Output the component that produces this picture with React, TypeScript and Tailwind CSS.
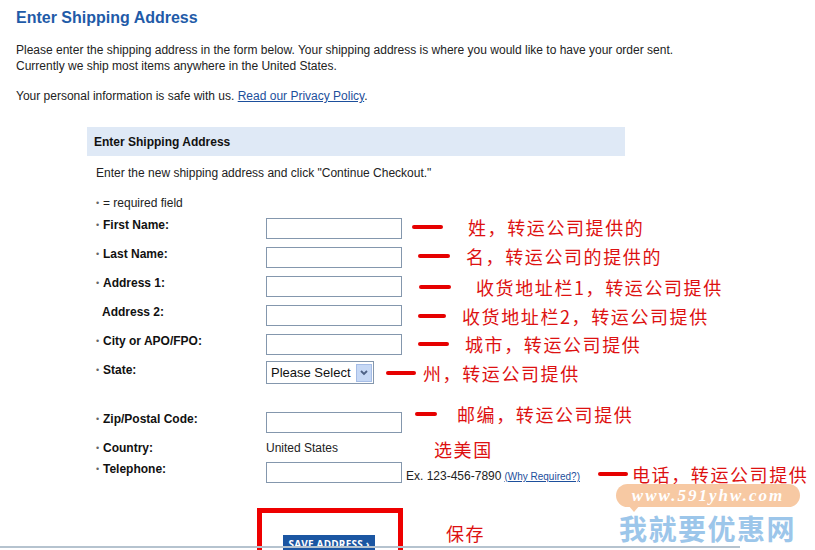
import type { FC, ReactElement, ReactNode } from "react";

const cjk = "font-['Noto_Sans_CJK_SC','Noto_Sans',sans-serif]";

interface RowProps {
  label: string;
  required?: boolean;
  h: string;
  labelPad?: string;
  children?: ReactNode;
}

const Row: FC<RowProps> = ({ label, required = true, h, labelPad = "", children }): ReactElement => {
  return (
    <div className={`flex items-start ${h}`}>
      <div className={`w-[170px] flex items-center leading-[14px] ${labelPad}`}>
        {required ? (
          <span className="w-[7px] text-[9px] text-[#666]">•</span>
        ) : (
          <span className="w-[6px]" />
        )}
        <span className="font-bold text-[12px] text-[#111]">{label}</span>
      </div>
      {children}
    </div>
  );
};

const Field: FC = (): ReactElement => (
  <div className="w-[136px] h-[21px] border border-[#8497ad] bg-white" />
);

interface NoteProps {
  dash?: string;
  text: string;
  pos: string;
}

const Note: FC<NoteProps> = ({ dash, text, pos }): ReactElement => (
  <div className={`absolute flex items-center ${pos}`}>
    {dash && <span className={`h-[4px] rounded-full bg-[#e60000] ${dash}`} />}
    <span className={`${cjk} text-[18px] leading-[22px] tracking-[1.6px] text-[#dd1111] whitespace-nowrap`}>
      {text}
    </span>
  </div>
);

const App: FC = (): ReactElement => {
  return (
    <div className="relative w-[815px] h-[550px] overflow-hidden bg-white font-['Liberation_Sans',Arial,sans-serif] text-[#222]">
      <div className="pl-4 pt-[8px]">
        <h1 className="text-[16px] leading-[20px] font-bold text-[#1f5ba8]">Enter Shipping Address</h1>
        <p className="mt-[14px] text-[12px] leading-[16px]">
          Please enter the shipping address in the form below. Your shipping address is where you would like to have your order sent.
          <br />
          Currently we ship most items anywhere in the United States.
        </p>
        <p className="mt-[14px] text-[12px] leading-[16px]">
          Your personal information is safe with us.{" "}
          <a className="text-[#1d4f9c] underline">Read our Privacy Policy</a>.
        </p>
      </div>

      <div className="ml-[87px] mt-[23px] w-[538px]">
        <div className="h-[29px] bg-[#dfe9f6] pl-[7px] flex items-center">
          <span className="font-bold text-[12px] text-[#111]">Enter Shipping Address</span>
        </div>
        <div className="pl-[9px]">
          <p className="mt-[9px] text-[12px] leading-[16px]">
            Enter the new shipping address and click "Continue Checkout."
          </p>
          <p className="mt-[14px] text-[12px] leading-[16px] flex items-center">
            <span className="w-[7px] text-[9px] text-[#666]">•</span>= required field
          </p>
          <div className="mt-[7px]">
            <Row label="First Name:" h="h-[29px]">
              <Field />
            </Row>
            <Row label="Last Name:" h="h-[29px]">
              <Field />
            </Row>
            <Row label="Address 1:" h="h-[29px]">
              <Field />
            </Row>
            <Row label="Address 2:" required={false} h="h-[29px]">
              <Field />
            </Row>
            <Row label="City or APO/FPO:" h="h-[27px]">
              <Field />
            </Row>
            <Row label="State:" h="h-[51px]" labelPad="pt-[2px]">
              <div className="w-[108px] h-[23px] border border-[#8497ad] bg-white flex items-center justify-between pl-[4px] pr-[1px]">
                <span className="text-[13px] leading-[16px] text-[#111] whitespace-nowrap">Please Select</span>
                <span className="shrink-0 w-[16px] h-[18px] bg-[#c6d8f5] border border-[#a6bde6] flex items-center justify-center">
                  <svg width="8" height="6" viewBox="0 0 8 6">
                    <path d="M1 1 L4 4 L7 1" stroke="#4d6185" strokeWidth="1.8" fill="none" />
                  </svg>
                </span>
              </div>
            </Row>
            <Row label="Zip/Postal Code:" h="h-[29px]">
              <Field />
            </Row>
            <Row label="Country:" h="h-[21px]">
              <span className="text-[12px] leading-[14px]">United States</span>
            </Row>
            <Row label="Telephone:" h="h-[29px]">
              <div className="flex items-end">
                <Field />
                <span className="ml-[4px] text-[12px] leading-[14px]">Ex. 123-456-7890</span>
                <a className="ml-[3px] text-[10px] leading-[13px] text-[#1d4f9c] underline">(Why Required?)</a>
              </div>
            </Row>
          </div>
        </div>
      </div>

      {/* red annotations */}
      <Note pos="left-[412px] top-[216px]" dash="w-[31px] mr-[25px]" text="姓，转运公司提供的" />
      <Note pos="left-[418px] top-[245px]" dash="w-[32px] mr-[16px]" text="名，转运公司的提供的" />
      <Note pos="left-[419px] top-[276px]" dash="w-[32px] mr-[25px]" text="收货地址栏1，转运公司提供" />
      <Note pos="left-[418px] top-[305px]" dash="w-[28px] mr-[16px]" text="收货地址栏2，转运公司提供" />
      <Note pos="left-[418px] top-[333px]" dash="w-[31px] mr-[16px]" text="城市，转运公司提供" />
      <Note pos="left-[386px] top-[362px]" dash="w-[30px] mr-[7px]" text="州，转运公司提供" />
      <Note pos="left-[415px] top-[403px]" dash="w-[22px] mr-[20px]" text="邮编，转运公司提供" />
      <Note pos="left-[434px] top-[438px]" text="选美国" />
      <Note pos="left-[598px] top-[463px]" dash="w-[30px] mr-[4px]" text="电话，转运公司提供" />
      <Note pos="left-[446px] top-[522px]" text="保存" />

      {/* watermark */}
      <div className="absolute left-[616px] top-[484px] w-[184px] h-[23px] rounded-full bg-[#f7c9a3] flex items-center justify-center">
        <span className="font-['Liberation_Serif',serif] italic font-bold text-[17px] leading-[19px] tracking-[2px] text-white">
          www.591yhw.com
        </span>
      </div>
      <div className="absolute left-[628px] top-[505px] w-0 h-0 border-l-[6px] border-l-transparent border-r-[6px] border-r-transparent border-t-[7px] border-t-[#f7c9a3]" />
      <div className={`absolute left-[619px] top-[514px] ${cjk} font-bold text-[28px] leading-[28px] tracking-[1.5px] text-[#9cc6ea] whitespace-nowrap`}>
        我就要优惠网
      </div>

      {/* save button area */}
      <div className="absolute left-[257px] top-[508px] w-[146px] h-[50px] border-[5px] border-[#ee0000]" />
      <div className="absolute left-[283px] top-[535px] w-[92px] h-[18px] bg-[#1b56a2] flex items-start justify-center pt-[3px]">
        <span className="font-['Open_Sans','Liberation_Sans',sans-serif] font-bold text-[10px] leading-[12px] tracking-[0.2px] text-white whitespace-nowrap">
          SAVE ADDRESS ›
        </span>
      </div>
      <div className="absolute left-0 top-[546px] w-[740px] h-[2px] bg-[#b5c3cf]" />
    </div>
  );
};

export default App;
